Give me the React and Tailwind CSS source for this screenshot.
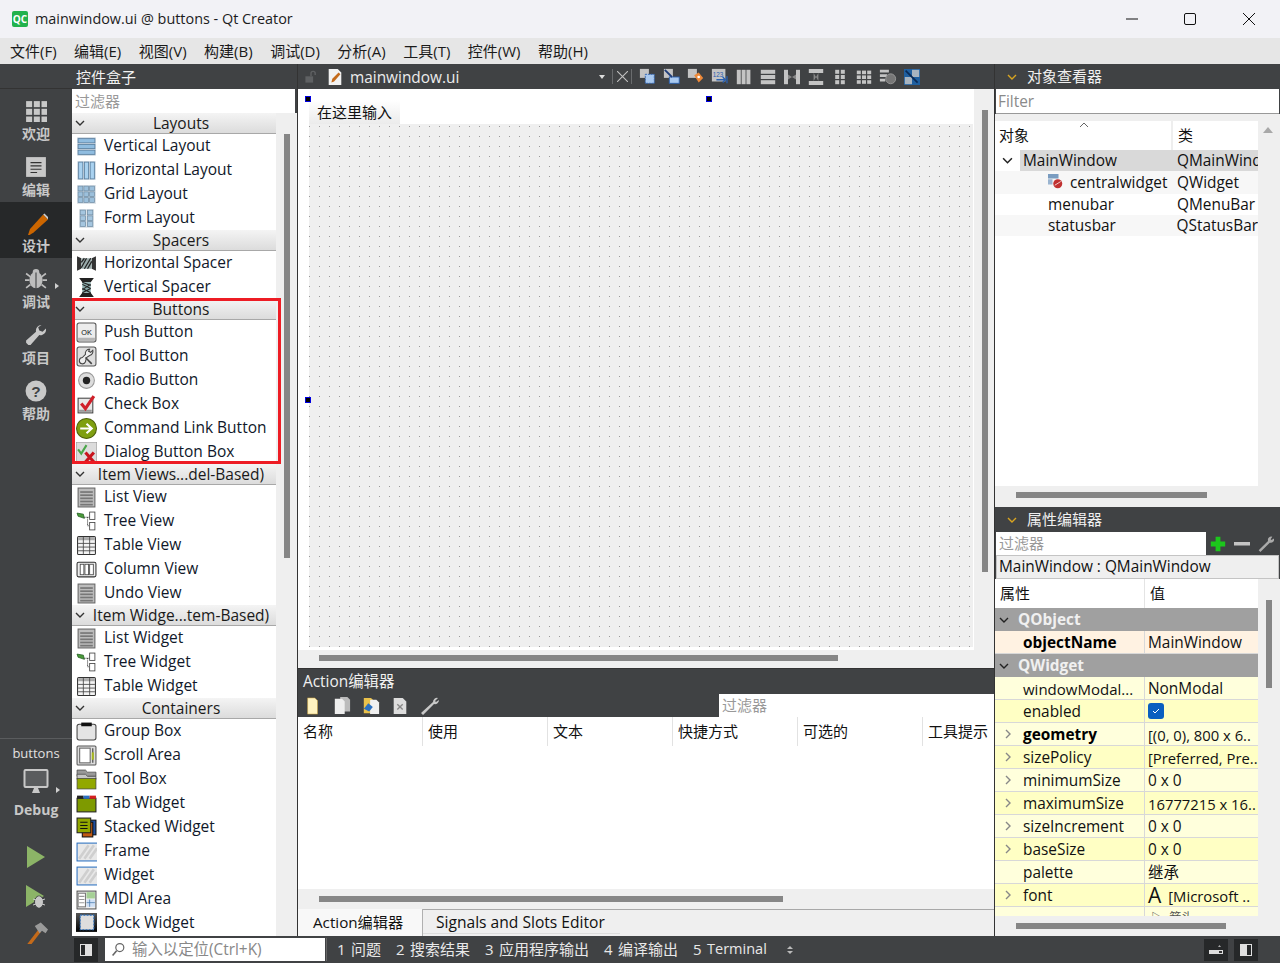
import React from "react";

const F = { fontFamily: '"Open Sans","Noto Sans CJK SC",sans-serif' };

const S = ({ children, w = 20, h = 20, vb = "0 0 20 20", className = "" }) => (
  <svg width={w} height={h} viewBox={vb} className={"shrink-0 " + className}>{children}</svg>
);

const Chevron = ({ c = "#333", s = 10, dir = "down", sw = 1.4 }) => (
  <svg width={s} height={s} viewBox="0 0 10 10" className="shrink-0">
    <path d={dir === "down" ? "M1 3l4 4 4-4" : dir === "right" ? "M3 1l4 4-4 4" : "M1 7l4-4 4 4"} fill="none" stroke={c} strokeWidth={sw} />
  </svg>
);

const Lines = () => (
  <>
    <rect x="2" y="1" width="16" height="18" fill="#bcbcbc" stroke="#666" />
    {[4, 7, 10, 13, 16].map((y) => <rect key={y} x="4" y={y} width="12" height="1.6" fill="#777" />)}
  </>
);
const TreeI = () => (
  <>
    <path d="M1 2l6 1 1 4-6-2z" fill="#4a9a3a" stroke="#1e5a1e" strokeWidth=".7" />
    <path d="M8 6h5M11 6v8h2" fill="none" stroke="#333" strokeDasharray="1 1" />
    <rect x="13" y="1" width="5" height="7" fill="#fff" stroke="#444" strokeWidth=".8" />
    <rect x="13" y="11" width="5" height="7" fill="#fff" stroke="#444" strokeWidth=".8" />
  </>
);
const TableI = () => (
  <>
    <rect x="1.5" y="1.5" width="17" height="17" rx="1" fill="#f4f4f4" stroke="#333" />
    <rect x="2" y="2" width="16" height="3" fill="#aaa" />
    <path d="M2 8h16M2 11.500h16M2 15h16M7 2v16M13 2v16" stroke="#444" strokeWidth=".8" />
  </>
);
const Hatch = ({ stroke = "#2a70c0" }) => (
  <>
    <rect x="1" y="2" width="20" height="17" fill="#e8e8e8" stroke={stroke} />
    <path d="M3 17L12 4M8 17L17 4M13 17L20 7" stroke="#cfcfcf" strokeWidth="2.500" />
  </>
);

const icons = {
  "Vertical Layout": <><rect x="1" y="1" width="18" height="18" rx="1" fill="#d7dfe6" />{[2.5, 8, 13.500].map((y) => <rect key={y} x="2" y={y} width="16" height="4" fill="#90bde0" stroke="#5a7f9f" strokeWidth=".8" />)}</>,
  "Horizontal Layout": <><rect x="1" y="1" width="18" height="18" rx="1" fill="#d7dfe6" />{[2.5, 8, 13.500].map((x) => <rect key={x} x={x} y="2" width="4" height="16" fill="#a9d2f0" stroke="#5a7f9f" strokeWidth=".8" />)}</>,
  "Grid Layout": <><rect x="1" y="1" width="18" height="18" fill="#dde3e8" />{[2, 7.500, 13].flatMap((x) => [2, 7.500, 13].map((y) => <rect key={x + "," + y} x={x} y={y} width="4.500" height="4.500" fill="#9cc0dc" stroke="#6f8da5" strokeWidth=".7" />))}</>,
  "Form Layout": <><rect x="3" y="1" width="14" height="18" fill="#dde3e8" />{[4, 11].flatMap((x) => [2, 7.500, 13].map((y) => <rect key={x + "," + y} x={x} y={y} width="5" height="4.500" fill="#a5c6df" stroke="#6f8da5" strokeWidth=".7" />))}</>,
  "Horizontal Spacer": <><path d="M1 3l4 2v10l-4 2zM19 3l-4 2v10l4 2z" fill="#333" /><rect x="5" y="5" width="10" height="10" fill="#9aa" /><path d="M5 14L10 5M8 15L14 5M11 15L15 8M5 9l3-4" stroke="#222" strokeWidth="1.200" /></>,
  "Vertical Spacer": <><path d="M3 1h14l-3 4H6zM3 19h14l-3-4H6z" fill="#222" /><rect x="6" y="5" width="8" height="10" fill="#8aa" /><path d="M6 7l8 4M6 11l8 4M6 5l8 3M14 7l-8 5M14 11l-8 4" stroke="#222" /></>,
  "Push Button": <><rect x="1" y="1" width="18" height="18" rx="2" fill="#ececec" stroke="#555" /><rect x="2" y="15" width="16" height="3" fill="#b5b5b5" /><text x="10" y="12" fontSize="7" textAnchor="middle" fill="#111" fontFamily="Liberation Sans">OK</text></>,
  "Tool Button": <><rect x="1" y="1" width="18" height="18" rx="2" fill="#dedede" stroke="#555" /><path d="M13 3a4 4 0 00-4 5l-3 3a3 3 0 103 4l1-4 3-2a4 4 0 003-5l-2 2-2-1z" fill="#eee" stroke="#444" /><path d="M9 11l6 6" stroke="#444" strokeWidth="1.500" /></>,
  "Radio Button": <><circle cx="10" cy="10" r="7.500" fill="#ddd" stroke="#999" /><circle cx="10" cy="10" r="3.500" fill="#222" /></>,
  "Check Box": <><rect x="2" y="4" width="14" height="14" fill="#e8e8e8" stroke="#444" /><rect x="3" y="15" width="12" height="2" fill="#999" /><path d="M5 9l4 5 8-12" fill="none" stroke="#d0202a" strokeWidth="3" /></>,
  "Command Link Button": <><circle cx="10" cy="10" r="9.500" fill="#7f9f10" stroke="#4c5f08" /><path d="M4 10h10M10 5.500l5 4.500-5 4.500" fill="none" stroke="#fff" strokeWidth="2" /></>,
  "Dialog Button Box": <><rect x="0" y="0" width="20" height="20" fill="#dcdcdc" stroke="#999" /><path d="M2 7l3 4 5-8" fill="none" stroke="#4aa64a" strokeWidth="2" /><path d="M9 10l8 9M17 10l-8 9" stroke="#c8141e" strokeWidth="3" /></>,
  "List View": <Lines />,
  "Tree View": <TreeI />,
  "Table View": <TableI />,
  "Column View": <><rect x="1" y="3" width="18" height="14" rx="1.500" fill="#eee" stroke="#333" />{[4, 8.500, 13].map((x) => <rect key={x} x={x} y="5" width="3.500" height="10" fill="#fff" stroke="#444" strokeWidth=".8" />)}</>,
  "Undo View": <Lines />,
  "List Widget": <Lines />,
  "Tree Widget": <TreeI />,
  "Table Widget": <TableI />,
  "Group Box": <><rect x="1" y="3" width="18" height="15" rx="2" fill="#e4e4e4" stroke="#444" /><rect x="5" y="1.500" width="10" height="3.500" fill="#111" /></>,
  "Scroll Area": <><rect x="1" y="1" width="18" height="18" rx="1" fill="#ddd" stroke="#555" /><rect x="3.500" y="3" width="10" height="14" fill="#fff" stroke="#666" /><path d="M16 3v14" stroke="#333" strokeWidth="1" /><rect x="15" y="7" width="2" height="7" fill="#a8b820" /></>,
  "Tool Box": <><path d="M1 1h8l2 2h8v4H1z" fill="#999" stroke="#444" strokeWidth=".7" /><path d="M1 5h8l2 2h8v3H1z" fill="#c5c5c5" stroke="#444" strokeWidth=".7" /><rect x="1" y="9" width="18" height="10" fill="#92a800" stroke="#444" strokeWidth=".7" /></>,
  "Tab Widget": <><rect x="1" y="5" width="18" height="13" fill="#7e9a00" stroke="#222" /><rect x="7" y="2.500" width="6" height="3" fill="#2a70c0" /><rect x="13" y="2.500" width="6" height="3" fill="#d42020" /><rect x="1" y="2.500" width="6" height="3" fill="#222" /></>,
  "Stacked Widget": <><rect x="11" y="3" width="8" height="14" fill="#1e4fa0" stroke="#111" /><rect x="6" y="5" width="10" height="14" fill="#c25a12" stroke="#111" /><rect x="1" y="1" width="13" height="14" fill="#92a800" stroke="#222" /><path d="M4 5h7M4 8h7M4 11h7" stroke="#111" /></>,
  "Frame": <Hatch />,
  "Widget": <Hatch />,
  "MDI Area": <><rect x="1" y="2" width="18" height="17" fill="#eee" stroke="#555" /><rect x="2" y="4" width="7" height="13" fill="#fff" stroke="#777" /><path d="M3 7h5M3 10h5M3 13h5" stroke="#999" /><rect x="10" y="3" width="8" height="6" fill="#a5d095" /><rect x="10" y="10" width="8" height="7" fill="#cfe0f5" /><path d="M10 13h8M13 10v7" stroke="#47a" strokeWidth=".7" /></>,
  "Dock Widget": <><rect x="0" y="0" width="21" height="18" fill="url(#dk)" /><defs><linearGradient id="dk" x1="0" x2="0" y1="0" y2="1"><stop offset="0" stopColor="#555" /><stop offset="1" stopColor="#000" /></linearGradient></defs><rect x="4" y="2" width="13" height="14" fill="#ddd" stroke="#2a70c0" strokeDasharray="2 1" /></>,
};

const groups = [
  ["Layouts", ["Vertical Layout", "Horizontal Layout", "Grid Layout", "Form Layout"]],
  ["Spacers", ["Horizontal Spacer", "Vertical Spacer"]],
  ["Buttons", ["Push Button", "Tool Button", "Radio Button", "Check Box", "Command Link Button", "Dialog Button Box"]],
  ["Item Views...del-Based)", ["List View", "Tree View", "Table View", "Column View", "Undo View"]],
  ["Item Widge...tem-Based)", ["List Widget", "Tree Widget", "Table Widget"]],
  ["Containers", ["Group Box", "Scroll Area", "Tool Box", "Tab Widget", "Stacked Widget", "Frame", "Widget", "MDI Area", "Dock Widget"]],
];

const RailBtn = ({ label, icon, active, arrow }) => (
  <div className={"relative h-[56px] flex flex-col items-center justify-start pt-[8px] " + (active ? "bg-[#262829]" : "")}>
    <div className="h-[26px] flex items-center justify-center">{icon}</div>
    <span className="text-[14px] leading-[20px] font-bold text-[#c8c8c8]">{label}</span>
    {arrow && <span className="absolute left-[55px] top-[25px] w-0 h-0 border-y-[3px] border-y-transparent border-l-[4px] border-l-[#d0d0d0]" />}
  </div>
);

const Bug = ({ s = 22, c = "#bdbdbd" }) => (
  <S w={s} h={s}><ellipse cx="10" cy="11" rx="6" ry="7.500" fill={c} /><circle cx="10" cy="4" r="3" fill={c} /><path d="M1 5l4 3M19 5l-4 3M0 11h4M20 11h-4M1 18l4-3M19 18l-4-3" stroke={c} strokeWidth="1.500" /><path d="M10 4v15" stroke="#404244" /></S>
);

const Rail = () => (
  <div className="w-[72px] shrink-0 bg-[#404244] flex flex-col">
    <div className="h-[25px] border-b border-[#333] mb-[1px]" />
    <RailBtn label="欢迎" icon={<S w={22} h={22}>{[1, 8, 15].flatMap((x) => [1, 8, 15].map((y) => <rect key={x + "-" + y} x={x} y={y} width="5.500" height="5.500" fill="#c8c8c8" />))}</S>} />
    <RailBtn label="编辑" icon={<S w={22} h={22}><rect x="1" y="1" width="18" height="18" fill="#c8c8c8" /><path d="M5 6h10M5 9h10M5 12h10M5 15h6" stroke="#333" /></S>} />
    <RailBtn label="设计" active icon={<S w={24} h={24}><path d="M3 21l2-6L16 3l4 4L8 18z" fill="#cc6600" /><path d="M16 3l4 4 1-1-4-4z" fill="#d0d0d0" /></S>} />
    <RailBtn label="调试" arrow icon={<Bug />} />
    <RailBtn label="项目" icon={<S w={22} h={22}><path d="M15 1a5 5 0 00-5 6L1 15v2l2 2h2l8-9a5 5 0 006-6l-3 3-3-1-1-3z" fill="#c8c8c8" /></S>} />
    <RailBtn label="帮助" icon={<S w={22} h={22}><circle cx="10" cy="10" r="9.500" fill="#c8c8c8" /><text x="10" y="15" textAnchor="middle" fontSize="14" fontWeight="700" fill="#404244" fontFamily="Liberation Sans">?</text></S>} />
    <div className="flex-1" />
    <div className="border-t border-[#5a5c5e] pt-[5px] flex flex-col items-center relative">
      <span className="text-[13px] leading-[18px] text-[#e0e0e0]">buttons</span>
      <S w={26} h={26} vb="0 0 26 26" className="mt-[7px]"><rect x="1.500" y="1" width="23" height="17" rx="1" fill="#5a5c5e" stroke="#c8c8c8" strokeWidth="2" /><path d="M9 24h8l-2-5h-4z" fill="#c8c8c8" /></S>
      <span className="absolute left-[56px] top-[48px] w-0 h-0 border-y-[3px] border-y-transparent border-l-[4px] border-l-[#d0d0d0]" />
      <span className="text-[14px] leading-[20px] font-bold text-[#c8c8c8] mt-[5px]">Debug</span>
    </div>
    <div className="h-[20px]" />
    <div className="h-[34px] flex items-center justify-center">
      <S w={20} h={24} vb="0 0 20 24"><path d="M1 1l18 11L1 23z" fill="#8cb467" /></S>
    </div>
    <div className="h-[46px] flex items-center justify-center">
      <S w={22} h={26} vb="0 0 22 26"><path d="M1 1l18 11L1 23z" fill="#8cb467" /><ellipse cx="14" cy="18" rx="4.500" ry="6" fill="#c8c8c8" stroke="#404244" /><path d="M14 12v12M8 15l3 1M20 15l-3 1M8 21l3-1M20 21l-3-1" stroke="#c8c8c8" /></S>
    </div>
    <div className="h-[43px] flex items-start justify-center">
      <S w={24} h={24}><path d="M2 21L12 8l2 2L4 23z" fill="#c46a1a" /><path d="M9 5l5-3 6 6-2 3-3-2-2 2z" fill="#9a9a9a" /></S>
    </div>
  </div>
);

const WidgetBox = () => (
  <div className="w-[226px] shrink-0 flex flex-col border-r border-[#333] min-h-0">
    <div className="h-[25px] bg-[#404244] text-[#f2f2f2] text-[15px] leading-[26px] pl-[4px] shrink-0">控件盒子</div>
    <div className="h-[24px] bg-white shrink-0 mr-[2px] pl-[3px] text-[15px] leading-[24px] text-[#999]">过滤器</div>
    <div className="flex flex-1 min-h-0 overflow-hidden relative">
      <div className="w-[204px] bg-white shrink-0">
        {groups.map(([g, items]) => (
          <div key={g}>
            <div className="h-[21px] relative flex items-center justify-center bg-gradient-to-b from-[#f4f4f4] to-[#dcdcdc] border-b border-[#a8a8a8] text-[15.5px] leading-[20px] text-[#1a1a1a] pb-[1px]">
              <span className="absolute left-[3px]"><Chevron c="#333" /></span>
              <span className="pl-[14px]">{g}</span>
            </div>
            {items.map((it) => (
              <div key={it} className="h-[24px] flex items-center pl-[4px] gap-[7px] text-[15.5px] text-[#10182a]">
                <S w={21} h={21}>{icons[it]}</S>
                <span>{it}</span>
              </div>
            ))}
          </div>
        ))}
      </div>
      <div className="flex-1 bg-[#efefef] pt-[21px] pl-[8px]">
        <div className="w-[6px] h-[424px] bg-[#868686]" />
      </div>
      <div className="absolute left-[0px] top-[185px] w-[209px] h-[166px] border-[3px] border-[#ed1c24] pointer-events-none" />
    </div>
  </div>
);

const Handle = ({ className }) => (
  <span className={"absolute w-[6px] h-[6px] bg-black border border-[#0000e0] " + className} />
);

const ToolIcons = () => {
  const g = "#c4c4c4";
  const list = [
    <S w={18} h={18}><rect x="1" y="1" width="10" height="10" fill={g} /><rect x="7" y="7" width="10" height="10" fill="#a9c9ef" stroke="#2a60b0" strokeDasharray="2 1" /></S>,
    <S w={18} h={18}><rect x="1" y="1" width="10" height="10" fill={g} /><rect x="7" y="10" width="11" height="7" fill="#a9c9ef" stroke="#2a60b0" /><path d="M2 2l8 8" stroke="#1e3c78" strokeWidth="2" /></S>,
    <S w={18} h={18}><rect x="1" y="1" width="10" height="10" fill={g} /><path d="M8 8l5-3 5 6-5 5z" fill="#ee8a3a" /><circle cx="13" cy="10" r="1.500" fill="#fff" /></S>,
    <S w={18} h={18}><rect x="1" y="1" width="15" height="14" fill={g} /><text x="2" y="10" fontSize="7" fill="#2a60b0" fontFamily="Liberation Sans">123</text><path d="M6 13h10M13 10l3 3-3 3" stroke="#2a60b0" strokeWidth="1.500" fill="none" /><rect x="17" y="9" width="1.500" height="8" fill="#2a60b0" /></S>,
    <S w={16} h={16}>{[1, 7, 13].map((x) => <rect key={x} x={x} y="1" width="5" height="18" fill={g} />)}</S>,
    <S w={16} h={16}>{[1, 7.500, 14].map((y) => <rect key={y} x="1" y={y} width="18" height="5" fill={g} />)}</S>,
    <S w={16} h={16}><rect x="0" y="1" width="5" height="18" fill={g} /><rect x="15" y="1" width="5" height="18" fill={g} /><path d="M5 7l5 3 5-3v6l-5-3-5 3z" fill="#888" /></S>,
    <S w={16} h={16}><rect x="1" y="0" width="18" height="5" fill={g} /><rect x="1" y="15" width="18" height="5" fill={g} /><path d="M7 5l3 5 3-5h0v10l-3-5-3 5z" fill="#888" /></S>,
    <S w={16} h={16}>{[4, 11].flatMap((x) => [1, 7.500, 14].map((y) => <rect key={x + "/" + y} x={x} y={y} width="5" height="5" fill={g} />))}</S>,
    <S w={16} h={16}>{[1, 7.500, 14].flatMap((x) => [2, 8, 14].map((y) => <rect key={x + "/" + y} x={x} y={y} width="5" height="4.500" fill={g} />))}</S>,
    <S w={18} h={18}><path d="M1 2h10v3H1zM1 7h8v3H1zM1 12h6v3H1z" fill={g} /><circle cx="13" cy="12" r="5.500" fill="#777" stroke="#999" /></S>,
    <S w={16} h={16} ><rect x="0" y="0" width="20" height="20" fill="#1f5f9f" /><rect x="10" y="1" width="9" height="9" fill="#a8b4c0" /><rect x="1" y="10" width="9" height="9" fill="#a8b4c0" /><path d="M2 2l15 15" stroke="#0a2a55" strokeWidth="2" /></S>,
  ];
  return <div className="flex items-center pl-[4px] w-[300px]">{list.map((ic, i) => <div key={i} className="w-[24px] flex justify-center">{ic}</div>)}</div>;
};

const Center = () => (
  <div className="flex-1 min-w-0 flex flex-col">
    <div className="h-[25px] bg-[#404244] flex items-center text-[#efefef] shrink-0">
      <div className="w-[25px] flex justify-center">
        <S w={14} h={14}><rect x="2" y="9" width="11" height="9" fill="#5f6163" /><path d="M10 9V5a3 3 0 016 0v2" fill="none" stroke="#5f6163" strokeWidth="2" /></S>
      </div>
      <S w={18} h={18} className="ml-[3px]"><path d="M3 1h10l4 4v14H3z" fill="#f2f2f2" /><path d="M6 16l1-4 7-7 2 2-7 8z" fill="#c46a1a" /></S>
      <span className="ml-[6px] text-[15.4px] leading-[27px] h-[25px] w-[249px] text-[#ececec]">mainwindow.ui</span>
      <span className="w-0 h-0 border-x-[3.5px] border-x-transparent border-t-[4px] border-t-[#ddd] mr-[7px]" />
      <span className="w-px h-[15px] bg-[#6a6c6e]" />
      <div className="w-[18px] flex justify-center"><S w={11} h={11} vb="0 0 10 10"><path d="M0 0l10 10M10 0L0 10" stroke="#c0c0c0" /></S></div>
      <span className="w-px h-[15px] bg-[#6a6c6e]" />
      <ToolIcons />
    </div>
    <div className="h-[561px] flex shrink-0 bg-white">
      <div className="flex-1 relative pl-[11px] pt-[11px] pr-[1px] flex flex-col">
        <Handle className="left-[7px] top-[7px]" />
        <Handle className="left-[408px] top-[7px]" />
        <Handle className="left-[7px] top-[308px]" />
        <div className="w-[91px] h-[24px] bg-gradient-to-b from-white to-[#ebebeb] pl-[8px] text-[15px] leading-[24px] text-[#111]">在这里输入</div>
        <div className="h-[523px] bg-[#efefef] bg-[radial-gradient(circle_at_0.5px_2.5px,#999_0.5px,transparent_0.7px)] bg-[size:10px_10px]" />
      </div>
      <div className="w-[20px] bg-[#efefef] pt-[21px] pl-[8px]"><div className="w-[6px] h-[462px] bg-[#868686]" /></div>
    </div>
    <div className="h-[18px] bg-[#efefef] pl-[21px] pt-[5px] shrink-0 border-b border-transparent"><div className="w-[519px] h-[6px] bg-[#868686]" /></div>
    <div className="h-px bg-[#333] shrink-0" />
    <div className="h-[25px] bg-[#404244] text-[#f0f0f0] text-[15.4px] leading-[25px] pl-[5px] shrink-0">Action编辑器</div>
    <div className="h-[23px] bg-[#404244] flex items-center shrink-0">
      <div className="flex items-center gap-[11px] pl-[6px] w-[421px]">
        <S w={18} h={18}><path d="M4 1h8l3 3v15H4z" fill="#fff3c0" stroke="#c8a040" strokeWidth=".6" /></S>
        <S w={18} h={18}><path d="M8 0h8l3 3v13H8z" fill="#bbb" /><path d="M2 2h8l3 3v14H2z" fill="#eee" /></S>
        <S w={18} h={18}><path d="M2 1h8l3 3v14H2z" fill="#eac14a" /><path d="M9 3h7l3 3v13H9z" fill="#f0f0f0" /><path d="M2 13l5-6 5 4-4 5z" fill="#2a70c0" /></S>
        <S w={18} h={18}><path d="M3 1h10l4 4v14H3z" fill="#ddd" /><path d="M7 8l6 6M13 8l-6 6" stroke="#888" strokeWidth="1.500" /></S>
        <S w={20} h={20}><path d="M18 2a4 4 0 00-5 4L1 17l2 2L14 8a4 4 0 005-4l-3 2-1-1z" fill="#c8c8c8" /></S>
      </div>
      <div className="flex-1 self-stretch bg-white text-[#999] text-[15px] leading-[23px] pl-[3px]">过滤器</div>
    </div>
    <div className="h-[172px] bg-white shrink-0">
      <div className="h-[29px] flex text-[15px] text-[#111]">
        {["名称", "使用", "文本", "快捷方式", "可选的", "工具提示"].map((t) => (
          <div key={t} className="w-[125px] shrink-0 pl-[5px] leading-[29px] border-r border-[#e2e2e2] last:border-r-0 last:w-[71px]">{t}</div>
        ))}
      </div>
    </div>
    <div className="h-[20px] bg-[#efefef] pl-[21px] pt-[7px] shrink-0"><div className="w-[464px] h-[6px] bg-[#868686]" /></div>
    <div className="flex-1 bg-[#efefef] flex text-[15.6px] text-[#111] border-t border-[#a8a8a8]">
      <div className="w-[125px] bg-[#f8f8f8] -mt-px pl-[15px] leading-[27px] border-r border-[#b0b0b0] text-[15.2px]">Action编辑器</div>
      <div className="w-[197px] pl-[13px] leading-[25px] h-[24px] border-b border-[#ddd] whitespace-nowrap">Signals and Slots Editor</div>
    </div>
  </div>
);

const propRows = [
  ["windowModal...", "NonModal", 0],
  ["enabled", "check", 1],
  ["geometry", "[(0, 0), 800 x 6..", 0, 1, 1],
  ["sizePolicy", "[Preferred, Pre..", 1, 1],
  ["minimumSize", "0 x 0", 0, 1],
  ["maximumSize", "16777215 x 16..", 1, 1],
  ["sizeIncrement", "0 x 0", 0, 1],
  ["baseSize", "0 x 0", 1, 1],
  ["palette", "继承", 0],
  ["font", "font", 1, 1],
];

const Right = () => (
  <div className="w-[286px] shrink-0 flex flex-col text-[15.4px] text-[#111] border-l border-[#333]">
    <div className="h-[25px] bg-[#404244] flex items-center shrink-0 pl-[12px] gap-[10px] text-[#f0f0f0] text-[15px]"><Chevron c="#d9a520" /><span className="leading-[25px]">对象查看器</span></div>
    <div className="h-[25px] bg-white border-b border-[#999] mx-px shrink-0 pl-[2px] leading-[25px] text-[#8a8a8a]">Filter</div>
    <div className="h-[7px] bg-[#efefef] shrink-0" />
    <div className="h-[365px] flex shrink-0">
      <div className="w-[263px] bg-white shrink-0 overflow-hidden">
        <div className="h-[29px] flex relative text-[15px]">
          <div className="w-[178px] pl-[4px] leading-[29px] border-r-2 border-[#eee]">对象</div>
          <div className="pl-[5px] leading-[29px]">类</div>
          <span className="absolute left-[84px] top-[-1px]"><Chevron c="#666" s={10} dir="up" sw={1} /></span>
        </div>
        <div className="h-[21px] flex leading-[22px]">
          <div className="w-[25px] pl-[7px] flex items-center"><Chevron c="#222" s={11} /></div>
          <div className="w-[153px] bg-[#d9d9d9] pl-[3px]">MainWindow</div>
          <div className="flex-1 bg-[#d9d9d9] pl-[4px] whitespace-nowrap overflow-hidden">QMainWind</div>
        </div>
        <div className="h-[23px] flex leading-[24px] bg-[#f7f7f7]">
          <div className="w-[178px] pl-[53px] flex gap-[7px]">
            <S w={15} h={15} className="mt-[3px]"><rect x="0" y="0" width="14" height="6" fill="#7a9cc0" /><rect x="0" y="7" width="6" height="7" fill="#9ab4d0" /><circle cx="13" cy="13" r="6" fill="#c03030" /><path d="M9 15l8-5" stroke="#fff" /></S>
            <span>centralwidget</span>
          </div>
          <div className="pl-[4px]">QWidget</div>
        </div>
        <div className="h-[21px] flex leading-[22px]"><div className="w-[178px] pl-[53px]">menubar</div><div className="pl-[4px]">QMenuBar</div></div>
        <div className="h-[21px] flex leading-[22px] bg-[#f7f7f7]"><div className="w-[178px] pl-[53px]">statusbar</div><div className="pl-[4px] whitespace-nowrap">QStatusBar</div></div>
      </div>
      <div className="flex-1 bg-[#efefef] pt-[6px] pl-[5px]"><span className="block w-0 h-0 border-x-[5px] border-x-transparent border-b-[6px] border-b-[#a8a8a8]" /></div>
    </div>
    <div className="h-[21px] bg-[#efefef] pl-[21px] pt-[6px] shrink-0"><div className="w-[191px] h-[6px] bg-[#868686]" /></div>
    <div className="h-[25px] bg-[#404244] flex items-center shrink-0 pl-[12px] gap-[10px] text-[#f0f0f0] text-[15px]"><Chevron c="#d9a520" /><span className="leading-[25px]">属性编辑器</span></div>
    <div className="h-[23px] bg-[#404244] flex items-center shrink-0">
      <div className="w-[210px] ml-px self-stretch bg-white pl-[3px] leading-[23px] text-[#999] text-[15px]">过滤器</div>
      <S w={16} h={16} className="ml-[4px]"><path d="M7 1h6v6h6v6h-6v6H7v-6H1V7h6z" fill="#1cc61c" /></S>
      <S w={16} h={4} vb="0 0 16 4" className="ml-[8px]"><rect width="16" height="3.500" fill="#c4c4c4" /></S>
      <S w={17} h={17} className="ml-[7px]"><path d="M18 2a4 4 0 00-5 5L2 18l2 2L15 9a4 4 0 005-5l-3 2-1-1z" fill="#aaa" /></S>
    </div>
    <div className="h-[24px] bg-[#efefef] border border-[#c4c4c4] mx-px shrink-0 pl-[2px] leading-[21px] whitespace-nowrap">MainWindow : QMainWindow</div>
    <div className="flex-1 flex min-h-0">
      <div className="w-[263px] shrink-0 flex flex-col">
        <div className="h-[29px] bg-white flex shrink-0 text-[15px]">
          <div className="w-[150px] pl-[5px] leading-[29px] border-r border-[#e4e4e4]">属性</div>
          <div className="pl-[5px] leading-[29px]">值</div>
        </div>
        <div className="h-[23px] bg-[#a0a0a0] flex items-center pl-[4px] gap-[9px] shrink-0 font-bold text-[#f0f0f0]"><Chevron c="#222" /><span>QObject</span></div>
        <div className="h-[23px] bg-[#fff2e2] flex shrink-0 border-b border-[#d8d8d8]">
          <div className="w-[150px] pl-[28px] font-bold text-black leading-[24px] border-r border-[#d8d8d8]">objectName</div>
          <div className="pl-[3px] leading-[24px]">MainWindow</div>
        </div>
        <div className="h-[23px] bg-[#a0a0a0] flex items-center pl-[4px] gap-[9px] shrink-0 font-bold text-[#f0f0f0]"><Chevron c="#222" /><span>QWidget</span></div>
        {propRows.map(([k, v, alt, exp, bold]) => (
          <div key={k} className={"h-[23px] flex shrink-0 border-b border-[#d8d8d8] leading-[24px] " + (alt ? "bg-[#ffffc4]" : "bg-[#ffffdc]")}>
            <div className={"w-[150px] flex border-r border-[#d8d8d8] " + (bold ? "font-bold text-black" : "")}>
              <div className="w-[28px] pl-[8px] pt-[6px]">{exp ? <Chevron c="#888" dir="right" /> : null}</div>
              <span className={k.startsWith("window") ? "text-[15px]" : ""}>{k}</span>
            </div>
            <div className={"pl-[3px] flex whitespace-nowrap overflow-hidden flex-1 " + (v.length > 12 ? "text-[14.8px]" : "")}>
              {v === "check" ? (
                <span className="w-[16px] h-[16px] mt-[3px] rounded-[3px] bg-[#0a5fc0] flex items-center justify-center">
                  <S w={10} h={10} vb="0 0 10 10"><path d="M2 5l2 2 4-4" fill="none" stroke="#fff" /></S>
                </span>
              ) : v === "font" ? (
                <><span className="text-[21px] mr-[7px] leading-[22px]">A</span><span className="text-[14.8px]">[Microsoft ..</span></>
              ) : v}
            </div>
          </div>
        ))}
        <div className="flex-1 overflow-hidden min-h-0 flex">
          <div className="w-[150px] border-r border-[#d8d8d8] bg-[#ffffdc]" />
          <div className="flex-1 bg-[#ffffdc] pl-[6px] pt-[4px] text-[12px] leading-[14px] text-[#555] overflow-hidden">▷&nbsp;&nbsp;箭头</div>
        </div>
        <div className="h-[20px] bg-[#efefef] pl-[21px] pt-[7px] shrink-0"><div className="w-[210px] h-[6px] bg-[#868686]" /></div>
      </div>
      <div className="flex-1 bg-[#efefef] pt-[21px] pl-[8px]"><div className="w-[6px] h-[88px] bg-[#868686]" /></div>
    </div>
  </div>
);

const StatusTab = ({ n, t, cn = "" }) => (
  <span className="flex"><span className="w-[14px]">{n}</span><span className={cn}>{t}</span></span>
);

const Status = () => (
  <div className="h-[27px] bg-[#404244] flex items-center shrink-0 text-[15px] text-[#e8e8e8]">
    <div className="w-[24px] h-[24px] bg-[#262829] ml-[2px] flex items-center justify-center">
      <S w={12} h={12} vb="0 0 12 12"><rect width="12" height="12" fill="#e0e0e0" /><rect x="1" y="1" width="4" height="10" fill="#262829" /></S>
    </div>
    <div className="w-[220px] h-[23px] bg-white ml-[7px] flex items-center pl-[6px] gap-[5px] text-[#888] text-[15.4px]">
      <S w={16} h={16}><circle cx="11" cy="7" r="5" fill="none" stroke="#666" strokeWidth="1.500" /><path d="M7 11l-5 6" stroke="#666" strokeWidth="2" /></S>
      <span className="whitespace-nowrap">输入以定位(Ctrl+K)</span>
    </div>
    <div className="w-px h-[23px] bg-[#666] ml-[1px]" />
    <div className="flex items-center gap-[15px] pl-[10px] whitespace-nowrap">
      <StatusTab n="1" t="问题" />
      <StatusTab n="2" t="搜索结果" />
      <StatusTab n="3" t="应用程序输出" />
      <StatusTab n="4" t="编译输出" />
      <StatusTab n="5" t="Terminal" cn="text-[14.500px]" />
    </div>
    <div className="ml-[20px] flex flex-col gap-[2px]">
      <span className="w-0 h-0 border-x-[3px] border-x-transparent border-b-[3px] border-b-[#bbb]" />
      <span className="w-0 h-0 border-x-[3px] border-x-transparent border-t-[3px] border-t-[#bbb]" />
    </div>
    <div className="flex-1" />
    <div className="w-[24px] h-[22px] bg-[#262829] flex items-center justify-center">
      <S w={14} h={12} vb="0 0 14 12"><rect y="6" width="14" height="4" fill="#ddd" /><rect x="10" y="7" width="3" height="2" fill="#333" /><path d="M9 3h3L10.500 1z" fill="#aaa" /></S>
    </div>
    <div className="w-[24px] h-[22px] bg-[#262829] ml-[6px] mr-[22px] flex items-center justify-center">
      <S w={12} h={12} vb="0 0 12 12"><rect width="12" height="12" fill="#e0e0e0" /><rect x="7" y="1" width="4" height="10" fill="#262829" /></S>
    </div>
  </div>
);

export default function App() {
  return (
    <div className="w-[1280px] h-[963px] flex flex-col overflow-hidden bg-[#404244]" style={F}>
      <div className="h-[38px] bg-[#f2f2f6] flex items-center shrink-0 pl-[12px] text-[#1c1c1c]">
        <div className="w-[16px] h-[16px] bg-[#22b24c] rounded-[2px] text-white text-[10px] font-bold leading-[16px] text-center">QC</div>
        <span className="ml-[7px] text-[14.400px]">mainwindow.ui @ buttons - Qt Creator</span>
        <div className="flex-1" />
        <S w={14} h={14} vb="0 0 14 14"><path d="M1 7h12" stroke="#111" /></S>
        <div className="w-[44px]" />
        <S w={14} h={14} vb="0 0 14 14"><rect x="1.500" y="1.500" width="11" height="11" rx="1.500" fill="none" stroke="#111" /></S>
        <div className="w-[45px]" />
        <S w={14} h={14} vb="0 0 14 14"><path d="M1 1l12 12M13 1L1 13" stroke="#111" /></S>
        <div className="w-[24px]" />
      </div>
      <div className="h-[26px] bg-[#e6e6e6] flex items-center shrink-0 pl-[10px] gap-[17.5px] text-[15px] text-[#1a1a1a] whitespace-nowrap">
        {["文件(F)", "编辑(E)", "视图(V)", "构建(B)", "调试(D)", "分析(A)", "工具(T)", "控件(W)", "帮助(H)"].map((m) => <span key={m}>{m}</span>)}
      </div>
      <div className="flex flex-1 min-h-0">
        <Rail />
        <div className="flex-1 min-w-0 flex flex-col">
          <div className="flex flex-1 min-h-0">
            <WidgetBox />
            <Center />
            <Right />
          </div>
          <Status />
        </div>
      </div>
    </div>
  );
}
